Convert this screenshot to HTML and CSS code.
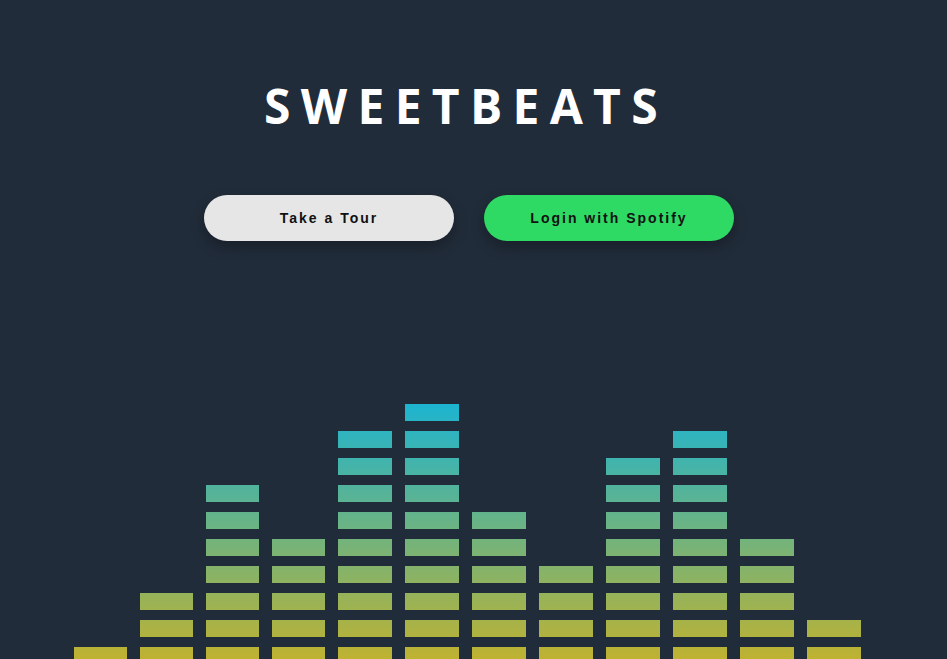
FILE: index.html
```html
<!DOCTYPE html>
<html>
<head>
<meta charset="utf-8">
<link rel="stylesheet" href="styles.css">
</head>
<body>
<div class="page">
  <h1 class="title">SWEETBEATS</h1>
  <div class="actions">
    <button class="btn btn-tour">Take a Tour</button>
    <button class="btn btn-login">Login with Spotify</button>
  </div>
  <div class="bars">
    <div class="col"><i></i></div>
    <div class="col"><i></i><i></i><i></i></div>
    <div class="col"><i></i><i></i><i></i><i></i><i></i><i></i><i></i></div>
    <div class="col"><i></i><i></i><i></i><i></i><i></i></div>
    <div class="col"><i></i><i></i><i></i><i></i><i></i><i></i><i></i><i></i><i></i></div>
    <div class="col"><i></i><i></i><i></i><i></i><i></i><i></i><i></i><i></i><i></i><i></i></div>
    <div class="col"><i></i><i></i><i></i><i></i><i></i><i></i></div>
    <div class="col"><i></i><i></i><i></i><i></i></div>
    <div class="col"><i></i><i></i><i></i><i></i><i></i><i></i><i></i><i></i></div>
    <div class="col"><i></i><i></i><i></i><i></i><i></i><i></i><i></i><i></i><i></i></div>
    <div class="col"><i></i><i></i><i></i><i></i><i></i></div>
    <div class="col"><i></i><i></i></div>
  </div>
</div>
</body>
</html>
```
FILE: styles.css
```css
html, body {
  margin: 0;
  padding: 0;
  height: 100%;
  overflow: hidden;
  background: #212c3a;
}
.page {
  width: 938px;
  display: flex;
  flex-direction: column;
  align-items: center;
}
.title {
  margin: 74px 6px 0 0;
  font-family: "Open Sans", sans-serif;
  font-weight: 700;
  font-size: 48px;
  line-height: 64px;
  letter-spacing: 10.3px;
  color: #ffffff;
}
.actions {
  margin-top: 57px;
  display: flex;
  gap: 30px;
}
.btn {
  width: 250px;
  height: 46px;
  border: none;
  border-radius: 23px;
  font-family: "Liberation Sans", Arial, sans-serif;
  font-weight: 700;
  font-size: 14px;
  letter-spacing: 2px;
  color: #111111;
  box-shadow: 0 6px 14px rgba(0, 0, 0, 0.3);
  padding: 0;
}
.btn-tour { background: #e6e6e6; }
.btn-login { background: #2ed964; }
.bars {
  align-self: flex-start;
  margin-top: 163px;
  padding-left: 74px;
  height: 260px;
  display: flex;
  align-items: flex-end;
  gap: 13px;
}
.col {
  width: 53px;
  display: flex;
  flex-direction: column;
  gap: 10px;
}
.col:nth-child(n+5) {
  width: 54px;
}
.col i {
  display: block;
  height: 17px;
  background: linear-gradient(to bottom, #1db4d0 404px, #c2b22e 664px) fixed;
}
```
